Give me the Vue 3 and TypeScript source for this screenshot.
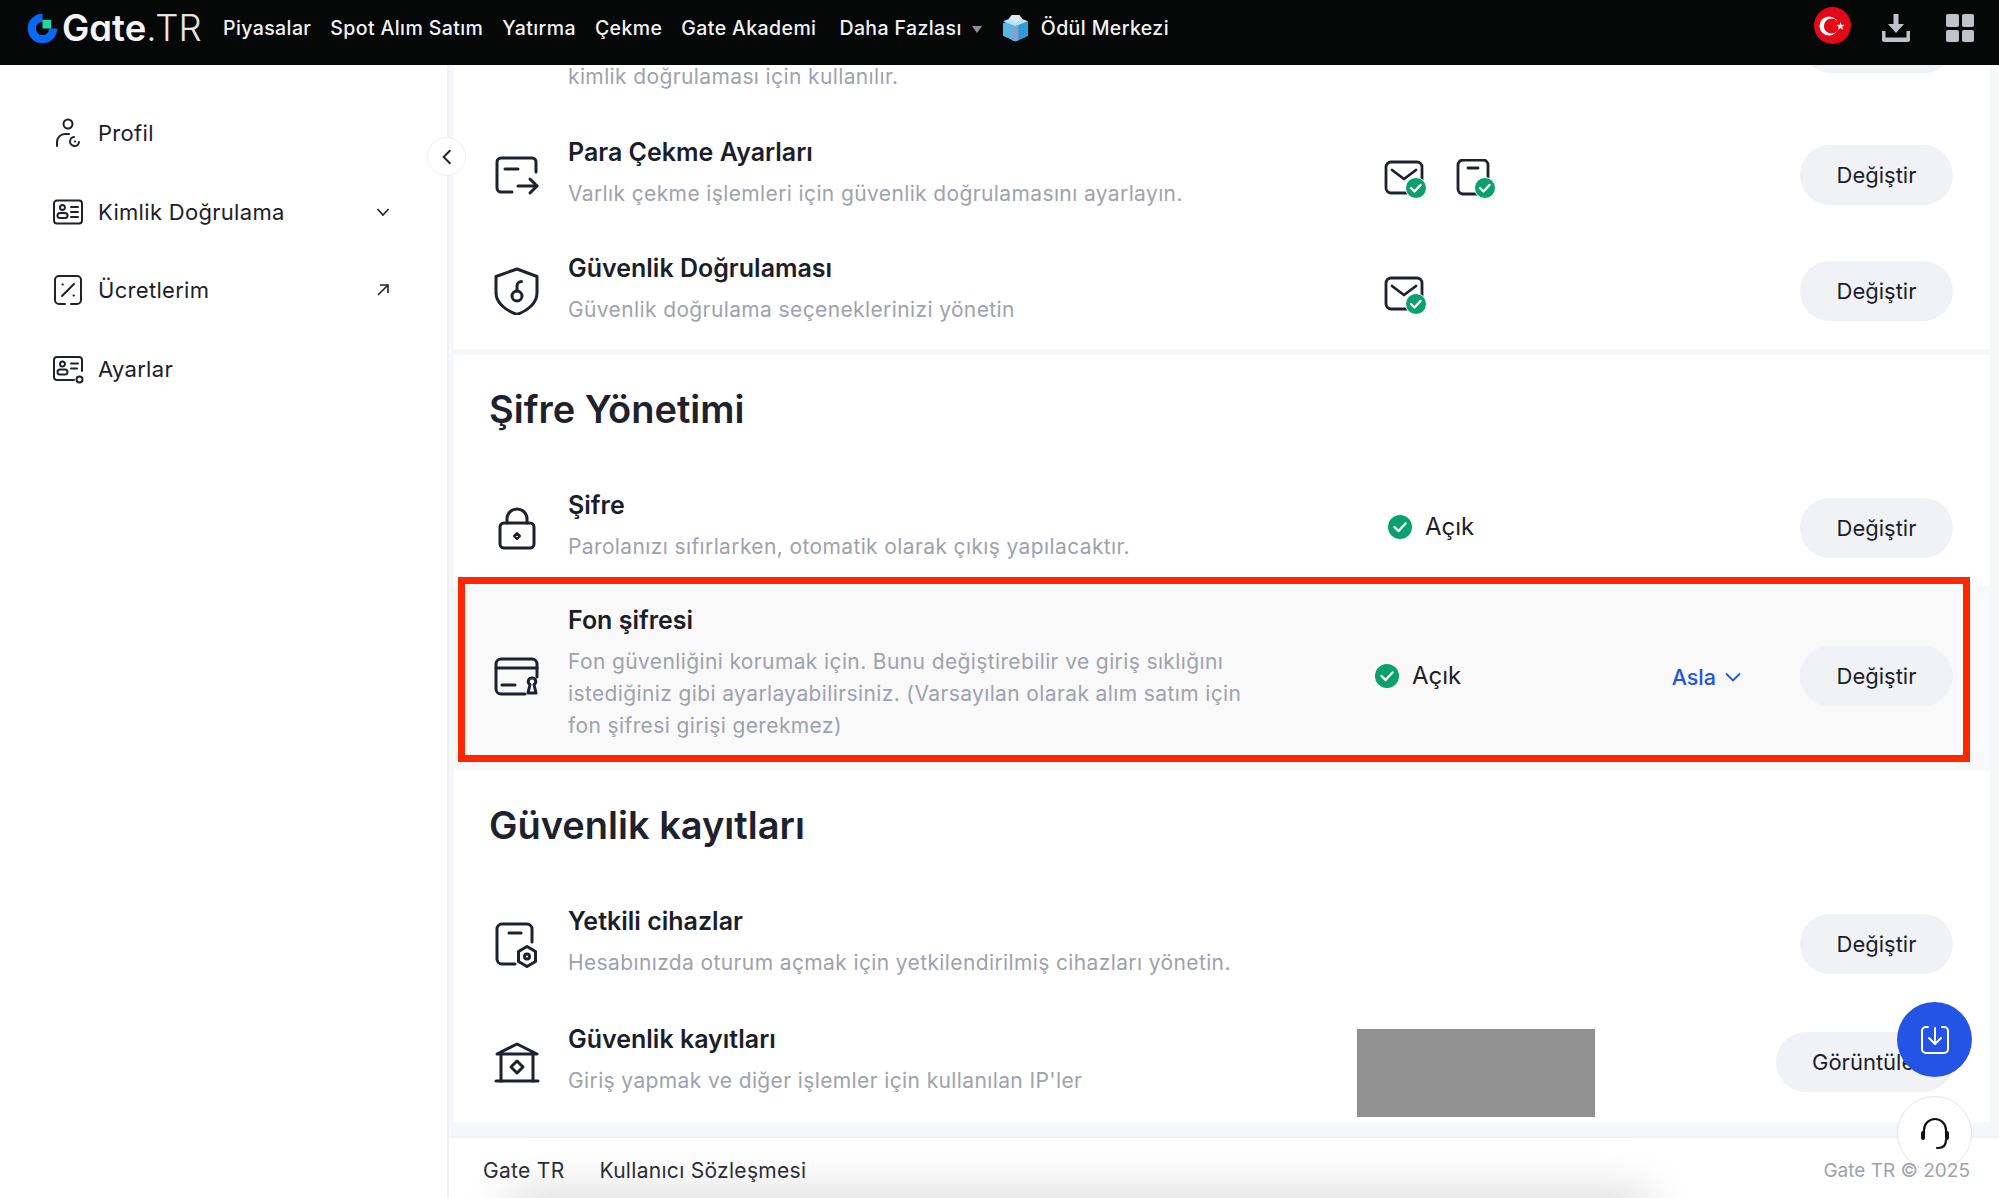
<script setup lang="ts">
const icons: Record<string, string[]> = {
  withdraw: ['M43 21V11a4 4 0 0 0-4-4H8a4 4 0 0 0-4 4v26a4 4 0 0 0 4 4h11', 'M12 18h13', 'M25 35h19', 'M37 28l7 7-7 7'],
  shield: ['M24 2l20 7.500V26c0 10-9 17.500-20 21.500C13 43.500 3 36 3 26V9.500z', 'M24 24v-5a4.500 4.500 0 0 1 4.500-4.500', 'M29 29a5 5 0 1 1-10 0 5 5 0 0 1 10 0z'],
  lock: ['M11 19h26a4 4 0 0 1 4 4v17a4 4 0 0 1-4 4H11a4 4 0 0 1-4-4V23a4 4 0 0 1 4-4z', 'M14 19v-4a10 10 0 0 1 20 0v4', 'M24 29.500l2.500 2.500-2.500 2.500-2.500-2.500z'],
  card: ['M44 25V12a5 5 0 0 0-5-5H8a5 5 0 0 0-5 5v25a5 5 0 0 0 5 5h24', 'M3 16h41', 'M9 33h13', 'M39 26a3.500 3.500 0 0 1 2 6.500l2 8.500h-8l2-8.500a3.500 3.500 0 0 1 2-6.500z'],
  device: ['M39 22V9a5 5 0 0 0-5-5H9a5 5 0 0 0-5 5v30a5 5 0 0 0 5 5h13', 'M16 13h12', 'M34 26.500l8.500 5v10l-8.500 5-8.500-5v-10z', 'M36.500 36.500a2.500 2.500 0 1 1-5 0 2.500 2.500 0 0 1 5 0z'],
  bank: ['M24 6L44 16H4z', 'M8 16v27', 'M40 16v27', 'M3 43h42', 'M24 23l6 6-6 6-6-6z'],
  profile: ['M20.500 7a4.500 4.500 0 1 1-9 0 4.500 4.500 0 0 1 9 0z', 'M5 29v-4a8 8 0 0 1 8-8h4', 'M22 20a4.500 4.500 0 1 0 5 5', 'M23 24.500h.1'],
  id: ['M5 4.500h22a3 3 0 0 1 3 3v17a3 3 0 0 1-3 3H5a3 3 0 0 1-3-3v-17a3 3 0 0 1 3-3z', 'M13 11.500a2.500 2.500 0 1 1-5 0 2.500 2.500 0 0 1 5 0z', 'M8 17h5a2 2 0 0 1 0 5H8a2 2 0 0 1 0-5z', 'M19 11h7', 'M19 16h7', 'M19 21h7'],
  fee: ['M13 30H7a4 4 0 0 1-4-4V6a4 4 0 0 1 4-4h18a4 4 0 0 1 4 4v20a4 4 0 0 1-4 4h-6', 'M10 22L22 10', 'M10.500 10.500h.4', 'M21.500 21.500h.4'],
  settings: ['M22 27H5a3 3 0 0 1-3-3V7a3 3 0 0 1 3-3h22a3 3 0 0 1 3 3v11', 'M13 11a2.500 2.500 0 1 1-5 0 2.500 2.500 0 0 1 5 0z', 'M8 16.500h5a2 2 0 0 1 0 5H8a2 2 0 0 1 0-5z', 'M19 10.500h7', 'M19 15.500h6', 'M30.500 26.500a3 3 0 1 1-6 0 3 3 0 0 1 6 0z'],
}
const navItems = ['Piyasalar', 'Spot Alım Satım', 'Yatırma', 'Çekme', 'Gate Akademi']
const sideItems = [
  { label: 'Kimlik Doğrulama', icon: 'id', tail: 'down' },
  { label: 'Ücretlerim', icon: 'fee', tail: 'out' },
  { label: 'Ayarlar', icon: 'settings', tail: '' },
]
</script>

<template>
  <div class="page">
    <header class="top">
      <div class="logo">
        <svg class="logo-mark" viewBox="0 0 32 32" width="35" height="35">
          <path d="M16 2.500A13.500 13.500 0 1 0 29.500 16H22a6 6 0 1 1-6-6z" fill="#0a68f5" />
          <rect x="16" y="8" width="8" height="8" fill="#1fd8a0" />
        </svg>
        <span class="logo-gate">Gate</span><span class="logo-tr">.TR</span>
      </div>
      <nav class="nav">
        <span v-for="n in navItems" :key="n">{{ n }}</span>
        <span class="more">Daha Fazlası<i class="caret"></i></span>
        <span class="reward">
          <svg viewBox="0 0 30 30" width="29" height="30">
            <path d="M15 5L28 10V23L15 29L2 23V10z" fill="#5bb4e6" />
            <path d="M15 13L28 8V23L15 29z" fill="#2d9ccf" />
            <path d="M15 13L2 8L15 3L28 8z" fill="#b8e2f5" />
            <path d="M11 1.500h8l3 4-7 4-7-4z" fill="#dfe9f2" />
            <path d="M12 14l6-2v16l-6 .5z" fill="#8a9fcb" />
          </svg>
          Ödül Merkezi
        </span>
      </nav>
      <div class="top-right">
        <svg class="flag" viewBox="0 0 37 37" width="37" height="37">
          <circle cx="18.500" cy="18.500" r="18.500" fill="#e30a17" />
          <circle cx="15" cy="19" r="9.500" fill="#fff" />
          <circle cx="17.500" cy="19" r="7.600" fill="#e30a17" />
          <path d="M26.500 15l1.100 2.900 3-.1-2.400 1.900.9 3-2.600-1.700-2.500 1.700.8-3-2.400-1.900 3.100.1z" fill="#fff" />
        </svg>
        <svg viewBox="0 0 28 28" width="28" height="28" class="dl">
          <path d="M11.500 0h5v10h5.500L14 19 6 10h5.500z" fill="#bfc2c6" />
          <path d="M0 17h3.500v6.500h21V17H28v8.500a2.500 2.500 0 0 1-2.500 2.500h-23A2.500 2.500 0 0 1 0 25.500z" fill="#bfc2c6" />
        </svg>
        <div class="apps"><i></i><i></i><i></i><i></i></div>
      </div>
    </header>

    <div class="body">
      <aside class="side">
        <button class="collapse">
          <svg viewBox="0 0 16 16" width="18" height="18"><path d="M11 2L5 8l6 6" fill="none" stroke="#1e2230" stroke-width="1.700" /></svg>
        </button>
        <div class="side-item">
          <svg class="side-ic" viewBox="0 0 32 32"><path v-for="d in icons.profile" :key="d" :d="d" /></svg>
          <span>Profil</span>
        </div>
        <div v-for="s in sideItems" :key="s.label" class="side-item">
          <svg class="side-ic" viewBox="0 0 32 32"><path v-for="d in icons[s.icon]" :key="d" :d="d" /></svg>
          <span>{{ s.label }}</span>
          <svg v-if="s.tail === 'down'" class="tail" viewBox="0 0 14 14"><path d="M1.500 4l5.500 6 5.500-6" /></svg>
          <svg v-if="s.tail === 'out'" class="tail" viewBox="0 0 14 14"><path d="M2 12L12 2" /><path d="M4 2h8v8" /></svg>
        </div>
      </aside>

      <main class="main">
        <section class="panel first">
          <div class="cut-row">
            <p class="desc">kimlik doğrulaması için kullanılır.</p>
            <span class="cut-btn"></span>
          </div>
          <div class="row">
            <svg class="ic" viewBox="0 0 48 48"><path v-for="d in icons.withdraw" :key="d" :d="d" /></svg>
            <div class="text">
              <h3>Para Çekme Ayarları</h3>
              <p class="desc">Varlık çekme işlemleri için güvenlik doğrulamasını ayarlayın.</p>
            </div>
            <div class="verify">
              <svg class="vf" viewBox="0 0 44 44">
                <path class="f" d="M7 3h26a5 5 0 0 1 5 5v21a5 5 0 0 1-5 5H7a5 5 0 0 1-5-5V8a5 5 0 0 1 5-5z" />
                <path class="f" d="M8 11l12 9 12-9" />
                <circle cx="32" cy="29" r="10.500" fill="#0ba06d" stroke="#fff" stroke-width="1" />
                <path class="ck" d="M27 29l3.500 3.500 6-6.500" />
              </svg>
              <svg class="vf" viewBox="0 0 44 44">
                <path class="f" d="M7 1h20a5 5 0 0 1 5 5v24a5 5 0 0 1-5 5H7a5 5 0 0 1-5-5V6a5 5 0 0 1 5-5z" />
                <path class="f" d="M12 9h10" />
                <circle cx="29" cy="29" r="10.500" fill="#0ba06d" stroke="#fff" stroke-width="1" />
                <path class="ck" d="M24 29l3.500 3.500 6-6.500" />
              </svg>
            </div>
            <button class="btn">Değiştir</button>
          </div>
          <div class="row">
            <svg class="ic" viewBox="0 0 48 48"><path v-for="d in icons.shield" :key="d" :d="d" /></svg>
            <div class="text">
              <h3>Güvenlik Doğrulaması</h3>
              <p class="desc">Güvenlik doğrulama seçeneklerinizi yönetin</p>
            </div>
            <div class="verify">
              <svg class="vf" viewBox="0 0 44 44">
                <path class="f" d="M7 3h26a5 5 0 0 1 5 5v21a5 5 0 0 1-5 5H7a5 5 0 0 1-5-5V8a5 5 0 0 1 5-5z" />
                <path class="f" d="M8 11l12 9 12-9" />
                <circle cx="32" cy="29" r="10.500" fill="#0ba06d" stroke="#fff" stroke-width="1" />
                <path class="ck" d="M27 29l3.500 3.500 6-6.500" />
              </svg>
            </div>
            <button class="btn">Değiştir</button>
          </div>
        </section>

        <section class="panel second">
          <h2>Şifre Yönetimi</h2>
          <div class="row">
            <svg class="ic" viewBox="0 0 48 48"><path v-for="d in icons.lock" :key="d" :d="d" /></svg>
            <div class="text">
              <h3>Şifre</h3>
              <p class="desc">Parolanızı sıfırlarken, otomatik olarak çıkış yapılacaktır.</p>
            </div>
            <div class="status">
              <svg viewBox="0 0 24 24" width="24" height="24"><circle cx="12" cy="12" r="12" fill="#0ba06d" /><path class="ck" d="M6.500 12l4 4 7-7.500" /></svg>
              <span>Açık</span>
            </div>
            <button class="btn">Değiştir</button>
          </div>
          <div class="row fon">
            <svg class="ic" viewBox="0 0 48 48"><path v-for="d in icons.card" :key="d" :d="d" /></svg>
            <div class="text fon-text">
              <h3>Fon şifresi</h3>
              <p class="desc">Fon güvenliğini korumak için. Bunu değiştirebilir ve giriş sıklığını<br />istediğiniz gibi ayarlayabilirsiniz. (Varsayılan olarak alım satım için<br />fon şifresi girişi gerekmez)</p>
            </div>
            <div class="status">
              <svg viewBox="0 0 24 24" width="24" height="24"><circle cx="12" cy="12" r="12" fill="#0ba06d" /><path class="ck" d="M6.500 12l4 4 7-7.500" /></svg>
              <span>Açık</span>
            </div>
            <div class="asla">
              <span>Asla</span>
              <svg viewBox="0 0 16 10" width="16" height="10"><path d="M1 1.500l7 7 7-7" fill="none" stroke="#2354e6" stroke-width="1.800" /></svg>
            </div>
            <button class="btn">Değiştir</button>
            <div class="mark"></div>
          </div>
        </section>

        <section class="panel third">
          <h2>Güvenlik kayıtları</h2>
          <div class="row">
            <svg class="ic" viewBox="0 0 48 48"><path v-for="d in icons.device" :key="d" :d="d" /></svg>
            <div class="text">
              <h3>Yetkili cihazlar</h3>
              <p class="desc">Hesabınızda oturum açmak için yetkilendirilmiş cihazları yönetin.</p>
            </div>
            <button class="btn">Değiştir</button>
          </div>
          <div class="row log-row">
            <svg class="ic" viewBox="0 0 48 48"><path v-for="d in icons.bank" :key="d" :d="d" /></svg>
            <div class="text log-text">
              <h3>Güvenlik kayıtları</h3>
              <p class="desc">Giriş yapmak ve diğer işlemler için kullanılan IP'ler</p>
            </div>
            <div class="redact"></div>
            <button class="btn wide">Görüntüle</button>
          </div>
        </section>

        <footer class="foot">
          <div class="foot-links"><span>Gate TR</span><span>Kullanıcı Sözleşmesi</span></div>
          <span class="copy">Gate TR © 2025</span>
        </footer>
      </main>
    </div>

    <button class="fab fab-dl">
      <svg viewBox="0 0 32 32" width="32" height="32" fill="none" stroke="#fff" stroke-width="2" stroke-linecap="round" stroke-linejoin="round">
        <path d="M9 3H7a4 4 0 0 0-4 4v18a4 4 0 0 0 4 4h18a4 4 0 0 0 4-4V7a4 4 0 0 0-4-4h-2" />
        <path d="M16 4v15" /><path d="M10 14l6 6 6-6" />
      </svg>
    </button>
    <button class="fab fab-help">
      <svg viewBox="0 0 32 32" width="32" height="34" fill="none" stroke="#111" stroke-width="2.200" stroke-linecap="round">
        <path d="M5 15v-3a11 11 0 0 1 22 0v3" />
        <rect x="2" y="13" width="4" height="9" rx="2" fill="#111" stroke="none" />
        <rect x="26" y="13" width="4" height="9" rx="2" fill="#111" stroke="none" />
        <path d="M27 22c0 5-3 8-8 8h-1" />
      </svg>
    </button>
  </div>
</template>

<style scoped>
.page {
  width: 1999px;
  height: 1198px;
  overflow: hidden;
  position: relative;
  display: flex;
  flex-direction: column;
  font-family: Inter, "Liberation Sans", sans-serif;
  color: #1b1e2a;
  background: #fff;
}
.top {
  height: 65px;
  flex: none;
  background: #060808;
  display: flex;
  align-items: center;
  padding-left: 25px;
  padding-bottom: 9px;
  box-sizing: border-box;
  color: #f3f3f3;
}
.logo {
  width: 198px;
  display: flex;
  align-items: center;
  font-size: 36.500px;
  line-height: 1;
}
.logo-mark { margin-right: 2px; flex: none; }
.logo-gate { font-weight: 600; color: #f5f5f5; font-feature-settings: "cv11"; }
.logo-tr { font-weight: 300; color: #e6e6e6; }
.nav {
  display: flex;
  align-items: center;
  gap: 19px;
  font-size: 19.500px;
  font-weight: 500;
  letter-spacing: .4px;
  white-space: nowrap;
}
.more { display: flex; align-items: center; margin-left: 4px; }
.caret {
  margin-left: 10px;
  margin-top: 3px;
  border: 5px solid transparent;
  border-top: 7px solid #8d9096;
  border-bottom: 0;
}
.reward { display: flex; align-items: center; gap: 11px; }
.top-right {
  margin-left: auto;
  display: flex;
  align-items: center;
  padding-right: 25px;
}
.flag { margin-top: -5px; }
.dl { margin-left: 31px; }
.apps {
  margin-left: 36px;
  width: 28px;
  height: 28px;
  display: grid;
  grid-template-columns: 1fr 1fr;
  gap: 3px;
}
.apps i { background: #bfc2c6; border-radius: 2px; }

.body { flex: 1; display: flex; min-height: 0; }
.side {
  width: 449px;
  flex: none;
  box-sizing: border-box;
  border-right: 2px solid #f0f1f5;
  padding: 29px 0 0 52px;
  position: relative;
}
.side-item {
  height: 78.500px;
  display: flex;
  align-items: center;
  gap: 14px;
  font-size: 22px;
  letter-spacing: .3px;
  font-weight: 400;
  padding-right: 57px;
}
.side-ic {
  width: 32px;
  height: 32px;
  fill: none;
  stroke: #1e2230;
  stroke-width: 2;
  stroke-linecap: round;
  stroke-linejoin: round;
  flex: none;
}
.tail {
  width: 14px;
  height: 14px;
  margin-left: auto;
  fill: none;
  stroke: #1e2230;
  stroke-width: 1.600;
}
.collapse {
  position: absolute;
  left: 427px;
  top: 72px;
  width: 39px;
  height: 39px;
  border-radius: 50%;
  background: #fff;
  border: 1px solid #eceef4;
  padding: 0;
  display: flex;
  align-items: center;
  justify-content: center;
}

.main {
  flex: 1;
  min-width: 0;
  background: #f6f7f9;
  display: flex;
  flex-direction: column;
  padding-left: 5px;
  box-sizing: border-box;
}
.panel { background: #fff; margin-right: 9px; }
.first { height: 284px; margin-bottom: 6px; overflow: hidden; }
.second { height: 416px; }
.third { height: 351px; margin-bottom: 14px; }
.cut-row {
  height: 52px;
  position: relative;
  padding-left: 114px;
}
.cut-row .desc { position: relative; top: -4px; }
.cut-btn {
  position: absolute;
  left: 1347px;
  top: -52px;
  width: 153px;
  height: 60px;
  border-radius: 30px;
  background: #f1f2f6;
}
h2 {
  margin: 0;
  height: 115px;
  padding: 36px 0 0 35px;
  box-sizing: border-box;
  font-size: 38px;
  line-height: 36px;
  font-weight: 600;
  color: #1f222e;
}
.row {
  height: 116px;
  display: flex;
  align-items: center;
  padding: 0 37px 0 39px;
  position: relative;
}
.log-row { margin-top: 2px; }
.ic {
  width: 48px;
  height: 48px;
  flex: none;
  fill: none;
  stroke: #1e2230;
  stroke-width: 3;
  stroke-linecap: round;
  stroke-linejoin: round;
  margin-right: 27px;
}
.text { width: 817px; flex: none; margin-top: -4px; }
h3 {
  margin: 0 0 10px;
  font-size: 25px;
  line-height: 31px;
  font-weight: 600;
  color: #1b1e2a;
}
.desc {
  margin: 0;
  font-size: 21px;
  line-height: 32px;
  font-weight: 400;
  letter-spacing: .38px;
  color: #9ea2ad;
}
.verify { display: flex; gap: 28px; margin-left: -1px; margin-top: 11px; }
.vf { width: 44px; height: 44px; }
.f { fill: none; stroke: #1e2230; stroke-width: 2.800; stroke-linecap: round; stroke-linejoin: round; }
.ck { fill: none; stroke: #fff; stroke-width: 2.400; stroke-linecap: round; stroke-linejoin: round; }
.status {
  display: flex;
  align-items: center;
  gap: 13px;
  font-size: 24px;
  margin-left: 3px;
  margin-top: -3px;
}
.btn {
  margin-left: auto;
  width: 153px;
  height: 60px;
  flex: none;
  border: 0;
  border-radius: 30px;
  background: #f1f2f6;
  font: inherit;
  font-size: 22px;
  color: #1b1e2a;
  padding: 0;
}
.wide { width: 177px; text-align: left; padding-left: 36px; white-space: nowrap; }
.fon {
  height: 185px;
  background: #f9f9f9;
  padding-bottom: 6px;
  box-sizing: border-box;
}
.fon-text { width: 807px; }
.fon .status { margin-left: 0; margin-top: 0; }
.asla {
  margin-left: auto;
  margin-right: 59px;
  display: flex;
  align-items: center;
  gap: 9px;
  font-size: 21.500px;
  font-weight: 500;
  color: #2354e6;
  padding-top: 3px;
}
.fon .btn { margin-left: 0; }
.mark {
  position: absolute;
  left: 4px;
  top: -9px;
  width: 1512px;
  height: 185px;
  box-sizing: border-box;
  border: 7.500px solid #ff2600;
  pointer-events: none;
}
.log-text { width: 789px; }
.redact {
  width: 238px;
  height: 88px;
  flex: none;
  background: #919191;
  margin-top: 22px;
}
.foot {
  height: 62px;
  flex: none;
  margin-left: -5px;
  background: #fff;
  border-top: 2px solid #f0f1f5;
  box-sizing: border-box;
  display: flex;
  align-items: center;
  justify-content: space-between;
  padding: 5px 29px 0 34px;
  font-size: 21px;
  letter-spacing: .3px;
  position: relative;
  overflow: hidden;
}
.foot::after {
  content: "";
  position: absolute;
  left: 60px;
  right: 350px;
  bottom: -26px;
  height: 30px;
  background: #d0d0d0;
  filter: blur(22px);
}
.foot-links { display: flex; gap: 35px; position: relative; z-index: 1; color: #2a2d38; }
.copy { color: #9ea2ad; position: relative; z-index: 1; font-size: 19px; letter-spacing: 0; }
.fab {
  position: absolute;
  left: 1897px;
  width: 75px;
  height: 75px;
  border-radius: 50%;
  padding: 0;
  display: flex;
  align-items: center;
  justify-content: center;
}
.fab-dl { top: 1002px; background: #2354e6; border: 0; }
.fab-help { top: 1096px; background: #fff; border: 1.500px solid #e3e4e6; }
</style>

<style>
html, body { margin: 0; padding: 0; background: #fff; }
</style>
